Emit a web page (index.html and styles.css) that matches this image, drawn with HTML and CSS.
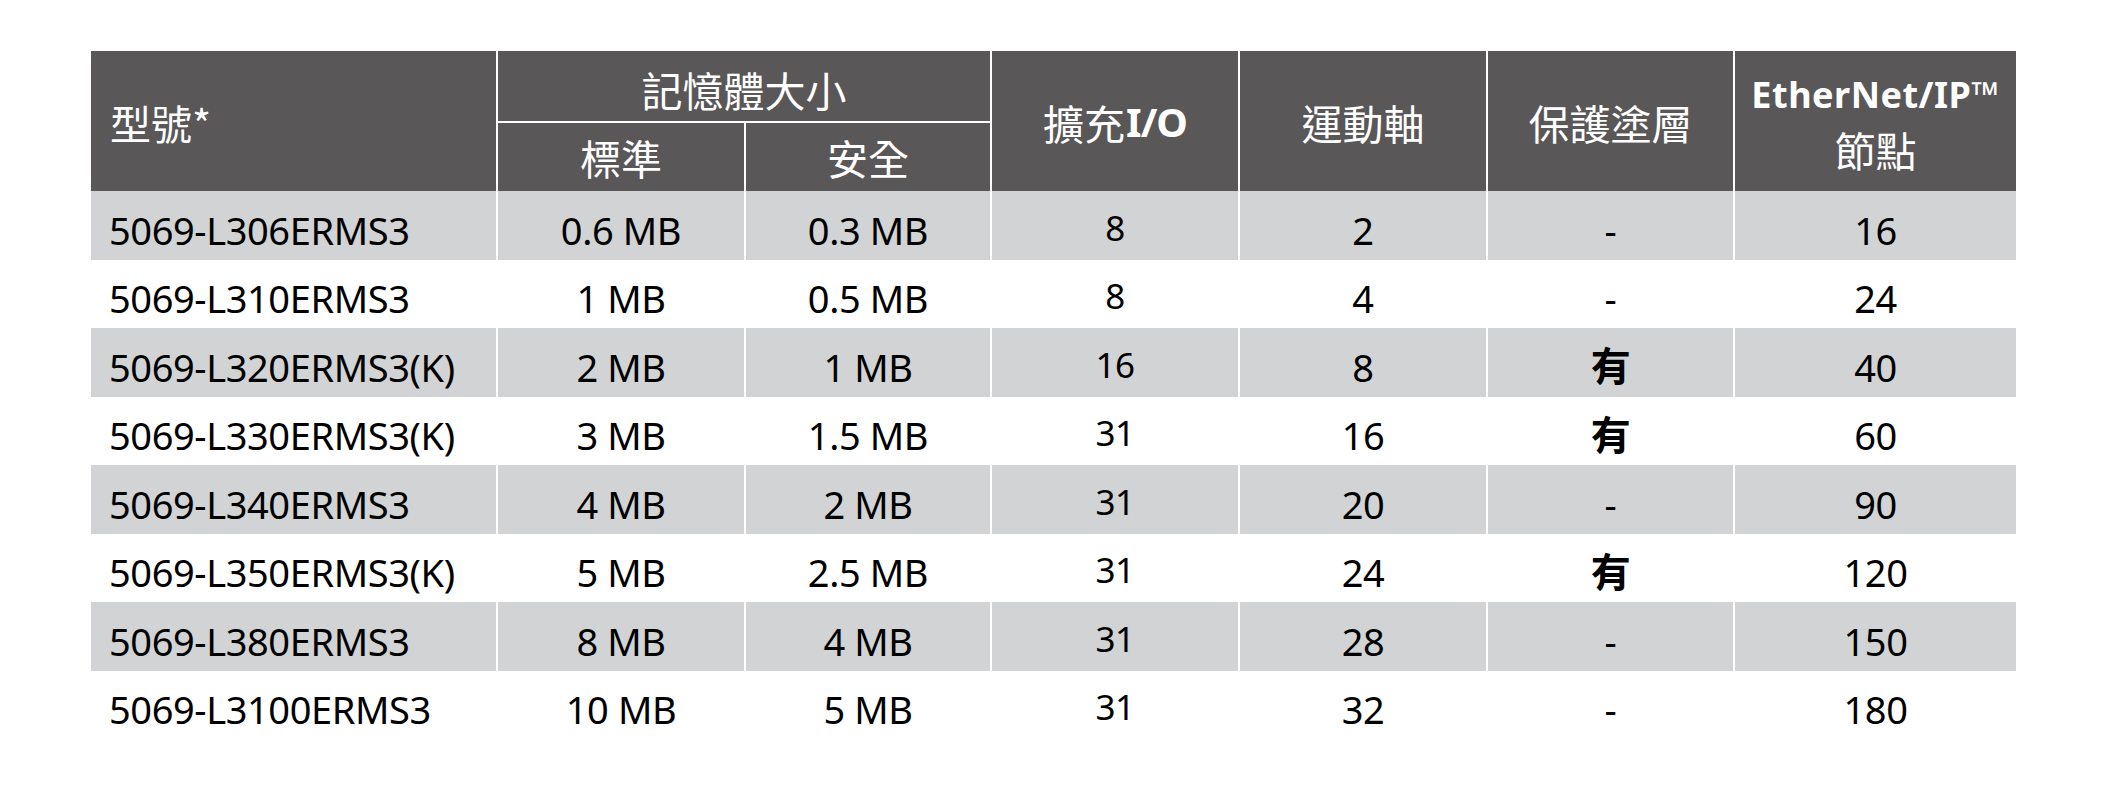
FILE: index.html
```html
<!DOCTYPE html>
<html lang="zh-Hant">
<head>
<meta charset="utf-8">
<title>規格表</title>
<link rel="stylesheet" href="styles.css">
</head>
<body>
<div class="page">
  <div class="spec">
    <div class="head">
      <div class="h h-model">型號*</div>
      <div class="h h-mem">記憶體大小</div>
      <div class="h h-std">標準</div>
      <div class="h h-safe">安全</div>
      <div class="h h-io">擴充<span class="lat">I/O</span></div>
      <div class="h h-axis">運動軸</div>
      <div class="h h-coat">保護塗層</div>
      <div class="h h-enet"><span class="enet-top">EtherNet/IP™</span><span class="enet-bot">節點</span></div>
    </div>
    <div class="row alt"><div class="c c-model">5069-L306ERMS3</div><div class="c">0.6 MB</div><div class="c">0.3 MB</div><div class="c c-io">8</div><div class="c">2</div><div class="c c-coat">-</div><div class="c">16</div></div>
    <div class="row"><div class="c c-model">5069-L310ERMS3</div><div class="c">1 MB</div><div class="c">0.5 MB</div><div class="c c-io">8</div><div class="c">4</div><div class="c c-coat">-</div><div class="c">24</div></div>
    <div class="row alt"><div class="c c-model">5069-L320ERMS3(K)</div><div class="c">2 MB</div><div class="c">1 MB</div><div class="c c-io">16</div><div class="c">8</div><div class="c c-yes">有</div><div class="c">40</div></div>
    <div class="row"><div class="c c-model">5069-L330ERMS3(K)</div><div class="c">3 MB</div><div class="c">1.5 MB</div><div class="c c-io">31</div><div class="c">16</div><div class="c c-yes">有</div><div class="c">60</div></div>
    <div class="row alt"><div class="c c-model">5069-L340ERMS3</div><div class="c">4 MB</div><div class="c">2 MB</div><div class="c c-io">31</div><div class="c">20</div><div class="c c-coat">-</div><div class="c">90</div></div>
    <div class="row"><div class="c c-model">5069-L350ERMS3(K)</div><div class="c">5 MB</div><div class="c">2.5 MB</div><div class="c c-io">31</div><div class="c">24</div><div class="c c-yes">有</div><div class="c">120</div></div>
    <div class="row alt"><div class="c c-model">5069-L380ERMS3</div><div class="c">8 MB</div><div class="c">4 MB</div><div class="c c-io">31</div><div class="c">28</div><div class="c c-coat">-</div><div class="c">150</div></div>
    <div class="row"><div class="c c-model">5069-L3100ERMS3</div><div class="c">10 MB</div><div class="c">5 MB</div><div class="c c-io">31</div><div class="c">32</div><div class="c c-coat">-</div><div class="c">180</div></div>
  </div>
</div>
</body>
</html>
```
FILE: styles.css
```css
html, body {
  margin: 0;
  background: #ffffff;
}

.page {
  padding: 51px 0 0 91px;
}

.spec {
  width: 1925px;
  display: flex;
  flex-direction: column;
  font-family: "Noto Sans", "Open Sans", "Noto Sans CJK TC", sans-serif;
  font-stretch: semi-condensed;
}

.head,
.row {
  display: grid;
  grid-template-columns: 405px 246px 244px 246px 246px 245px 281px;
  column-gap: 2px;
}

.head {
  grid-template-rows: 70px 70px;
}

.row {
  grid-template-rows: 68.5px;
}

.h {
  background: #595758;
  color: #ffffff;
  display: flex;
  align-items: center;
  justify-content: center;
  font-family: "Noto Sans CJK TC", "Noto Sans", sans-serif;
  font-size: 41px;
  font-weight: 400;
  line-height: 1;
  box-sizing: border-box;
  padding-top: 2px;
}

.h-model {
  grid-row: 1 / 3;
  grid-column: 1;
  justify-content: flex-start;
  padding-left: 19px;
}

.h-mem {
  grid-row: 1;
  grid-column: 2 / 4;
  padding-top: 6px;
}

.h-std {
  grid-row: 2;
  grid-column: 2;
  border-top: 2px solid #ffffff;
  padding-top: 0;
}

.h-safe {
  grid-row: 2;
  grid-column: 3;
  border-top: 2px solid #ffffff;
  padding-top: 0;
}

.h-io {
  grid-row: 1 / 3;
  grid-column: 4;
}

.h-axis {
  grid-row: 1 / 3;
  grid-column: 5;
}

.h-coat {
  grid-row: 1 / 3;
  grid-column: 6;
}

.h-enet {
  grid-row: 1 / 3;
  grid-column: 7;
  flex-direction: column;
  padding-top: 5px;
}

.lat {
  font-family: "Noto Sans", "Open Sans", sans-serif;
  font-stretch: semi-condensed;
  font-weight: 700;
  font-size: 40px;
  letter-spacing: -1px;
  margin-left: 1px;
}

.enet-top {
  display: block;
  font-family: "Noto Sans", "Open Sans", sans-serif;
  font-stretch: semi-condensed;
  font-weight: 700;
  font-size: 36px;
  letter-spacing: 0.5px;
  line-height: 1;
}

.enet-bot {
  display: block;
  margin-top: 16px;
  line-height: 1;
}

.c {
  display: flex;
  align-items: center;
  justify-content: center;
  box-sizing: border-box;
  padding-top: 9px;
  font-size: 38px;
  letter-spacing: -0.4px;
  color: #000000;
  background: #ffffff;
  white-space: nowrap;
}

.row.alt .c {
  background: #d1d3d4;
}

.c-model {
  justify-content: flex-start;
  padding-left: 18px;
}

.c-io {
  font-size: 35px;
  padding-top: 4px;
}

.c-yes {
  font-family: "Noto Sans CJK TC", sans-serif;
  font-weight: 700;
  font-size: 40px;
  line-height: 1;
  padding-top: 4px;
}
```
